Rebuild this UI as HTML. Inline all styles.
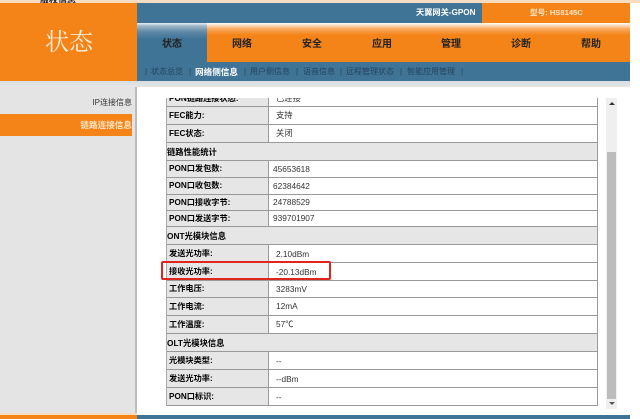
<!DOCTYPE html>
<html><head><meta charset="utf-8"><style>
html,body{margin:0;padding:0;background:#fff;}
#p{position:relative;width:640px;height:419px;overflow:hidden;background:#fff;font-family:"Liberation Sans","Noto Sans CJK SC",sans-serif;filter:blur(.3px);}
.a{position:absolute;white-space:nowrap;}
.n{top:37px;width:70px;text-align:center;font-size:10px;font-weight:bold;color:#222;line-height:16px;}
.s{top:65px;font-size:8px;color:#24445c;line-height:14px;}
.r{position:absolute;left:166px;width:431px;border-bottom:1px solid #999;box-sizing:border-box;background:#fff;}
.r b{position:absolute;left:0;top:0;bottom:0;width:103px;background:#e6e6e6;border-right:1px solid #999;font-size:8.2px;color:#000;padding-left:3px;box-sizing:border-box;white-space:nowrap;}
.r i{position:absolute;left:110px;font-style:normal;font-size:8.3px;color:#333;white-space:nowrap;}
.r i.v{left:107px;}
.h{background:#e6e6e6;}
.h u{position:absolute;left:1px;text-decoration:none;font-weight:bold;font-size:8.3px;color:#000;white-space:nowrap;}
</style></head><body><div id="p">
<div class="a" style="left:0;top:0;width:640px;height:3px;background:#f6dcc0;overflow:hidden"><span style="position:absolute;left:40px;top:-7px;font-size:9px;font-weight:bold;color:#223">版权信息</span></div>
<div class="a" style="left:0;top:3px;width:137px;height:78px;background:#f58418"></div>
<div class="a" style="left:137px;top:3px;width:345px;height:20px;background:#3f7497"></div>
<div class="a" style="left:482px;top:3px;width:148px;height:20px;background:#f58418"></div>
<div class="a" style="left:416px;top:6px;font-size:8.2px;font-weight:bold;color:#fff;line-height:14px">天翼网关-GPON</div>
<div class="a" style="left:530px;top:6px;font-size:7.6px;font-weight:bold;color:#fde6c8;line-height:14px">型号: HS8145C</div>
<div class="a" style="left:137px;top:23px;width:493px;height:39px;background:linear-gradient(#fff 0,#fbe2c6 2px,#f8a85c 6px,#f58418 12px)"></div>
<div class="a" style="left:137px;top:23px;width:70px;height:39px;background:linear-gradient(#e8eef2 0,#9db6c8 3px,#5d88a6 9px,#3f7497 16px)"></div>
<div class="a" style="left:137px;top:62px;width:493px;height:19px;background:#3f7497"></div>
<div class="a" style="left:45px;top:28px;font-family:'Liberation Serif','Noto Serif CJK SC',serif;font-size:24px;color:#fdf0dc;line-height:30px">状态</div>
<div class="a n" style="left:137px">状态</div>
<div class="a n" style="left:207px">网络</div>
<div class="a n" style="left:277px">安全</div>
<div class="a n" style="left:347px">应用</div>
<div class="a n" style="left:416px">管理</div>
<div class="a n" style="left:486px">诊断</div>
<div class="a n" style="left:556px">帮助</div>
<div class="a s" style="left:145px">|</div><div class="a s" style="left:151px">状态总览</div>
<div class="a s" style="left:189px">|</div>
<div class="a s" style="left:195px;color:#fff;font-weight:bold;font-size:8.6px">网络侧信息</div>
<div class="a s" style="left:244px">|</div><div class="a s" style="left:250px">用户侧信息</div>
<div class="a s" style="left:296px">|</div><div class="a s" style="left:303px">语音信息</div>
<div class="a s" style="left:340px">|</div><div class="a s" style="left:346px">远程管理状态</div>
<div class="a s" style="left:400px">|</div><div class="a s" style="left:407px">智能应用管理</div>
<div class="a s" style="left:461px">|</div>
<div class="a" style="left:0;top:81px;width:630px;height:6px;background:linear-gradient(#d8dfe3,#e4e4e4)"></div>
<div class="a" style="left:0;top:87px;width:135px;height:328px;background:#e4e4e4"></div>
<div class="a" style="left:135px;top:87px;width:2px;height:328px;background:#bdbdbd"></div>
<div class="a" style="left:0;top:114px;width:132px;height:22px;background:#f58418"></div>
<div class="a" style="right:508px;top:96px;font-size:8px;color:#333;line-height:14px">IP连接信息</div>
<div class="a" style="right:508px;top:118px;font-size:8.6px;font-weight:bold;color:#fde6c8;line-height:14px">链路连接信息</div>
<div class="a" style="left:166px;top:98px;width:431px;height:308px;border-right:1px solid #999;background:#fff"></div>
<div class="a" style="left:166px;top:98px;width:1px;height:308px;background:#aaa;z-index:3"></div>

<div class="r" style="top:98px;height:9px;line-height:1px;overflow:hidden"><b>PON链路连接状态:</b><i>已连接</i></div>
<div class="r" style="top:107px;height:18px;line-height:17px"><b>FEC能力:</b><i>支持</i></div>
<div class="r" style="top:125px;height:18px;line-height:17px"><b>FEC状态:</b><i>关闭</i></div>
<div class="r h" style="top:143px;height:18px;line-height:18px"><u>链路性能统计</u></div>
<div class="r" style="top:161px;height:17px;line-height:16px"><b>PON口发包数:</b><i class="v">45653618</i></div>
<div class="r" style="top:178px;height:17px;line-height:16px"><b>PON口收包数:</b><i class="v">62384642</i></div>
<div class="r" style="top:195px;height:16px;line-height:15px"><b>PON口接收字节:</b><i class="v">24788529</i></div>
<div class="r" style="top:211px;height:16px;line-height:15px"><b>PON口发送字节:</b><i class="v">939701907</i></div>
<div class="r h" style="top:227px;height:18px;line-height:18px"><u>ONT光模块信息</u></div>
<div class="r" style="top:245px;height:18px;line-height:18px"><b>发送光功率:</b><i>2.10dBm</i></div>
<div class="r" style="top:263px;height:18px;line-height:18px"><b>接收光功率:</b><i>-20.13dBm</i></div>
<div class="r" style="top:281px;height:17px;line-height:16px"><b>工作电压:</b><i>3283mV</i></div>
<div class="r" style="top:298px;height:18px;line-height:17px"><b>工作电流:</b><i>12mA</i></div>
<div class="r" style="top:316px;height:18px;line-height:17px"><b>工作温度:</b><i>57℃</i></div>
<div class="r h" style="top:334px;height:18px;line-height:18px"><u>OLT光模块信息</u></div>
<div class="r" style="top:352px;height:18px;line-height:18px"><b>光模块类型:</b><i>--</i></div>
<div class="r" style="top:370px;height:18px;line-height:18px"><b>发送光功率:</b><i>--dBm</i></div>
<div class="r" style="top:388px;height:18px;line-height:18px"><b>PON口标识:</b><i>--</i></div>

<div class="a" style="left:161px;top:261px;width:170px;height:19px;border:2px solid #e0261c;border-radius:2px;box-sizing:border-box;z-index:5"></div>

<div class="a" style="left:606px;top:98px;width:11px;height:311px;background:#efefef"></div>
<div class="a" style="left:607px;top:152px;width:9px;height:247px;background:#bcbcbc"></div>
<div class="a" style="left:609px;top:102px;width:0;height:0;border-left:3px solid transparent;border-right:3px solid transparent;border-bottom:3px solid #333"></div>
<div class="a" style="left:609px;top:402px;width:0;height:0;border-left:3px solid transparent;border-right:3px solid transparent;border-top:3px solid #555"></div>

<div class="a" style="left:0;top:413px;width:137px;height:2px;background:#f6dcc0"></div>
<div class="a" style="left:0;top:415px;width:137px;height:4px;background:#f58418"></div>
<div class="a" style="left:137px;top:415px;width:493px;height:4px;background:#3f7497"></div>
</div></body></html>
